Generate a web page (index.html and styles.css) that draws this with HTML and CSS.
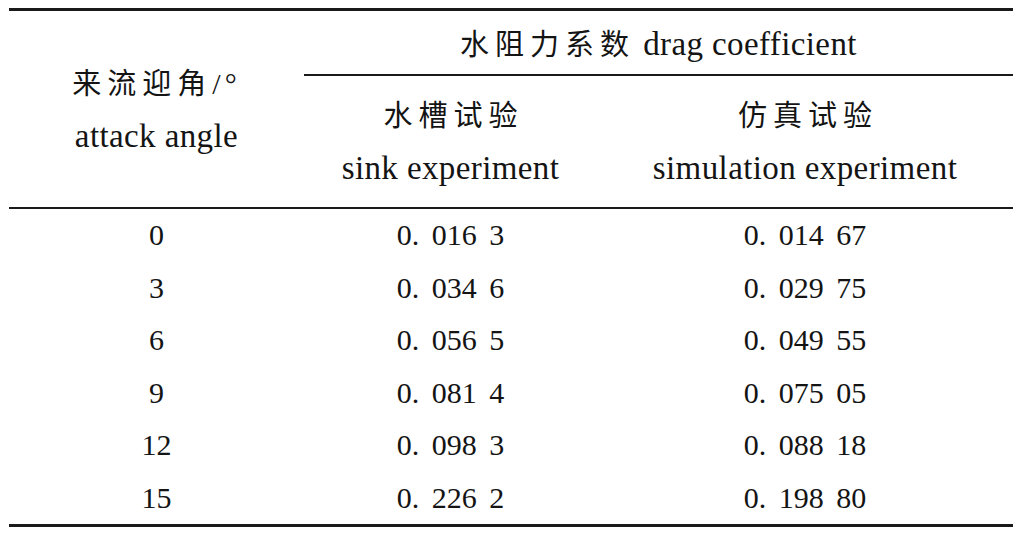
FILE: index.html
```html
<!DOCTYPE html>
<html lang="zh-CN">
<head>
<meta charset="utf-8">
<title>来流迎角与水阻力系数</title>
<link rel="stylesheet" href="styles.css">
</head>
<body>
<table class="data">
  <colgroup><col class="c1"><col class="c2"><col class="c3"></colgroup>
  <thead>
    <tr>
      <th rowspan="2" class="angle">
        <div class="line"><span class="zh">来流迎角</span><span class="sym">/°</span></div>
        <div class="line en">attack angle</div>
      </th>
      <th colspan="2" class="group">
        <div class="gline"><span class="zh">水阻力系数</span><span class="en gap">drag coefficient</span></div>
      </th>
    </tr>
    <tr>
      <th class="sub">
        <div class="line"><span class="zh">水槽试验</span></div>
        <div class="line en">sink experiment</div>
      </th>
      <th class="sub">
        <div class="line"><span class="zh">仿真试验</span></div>
        <div class="line en">simulation experiment</div>
      </th>
    </tr>
  </thead>
  <tbody>
    <tr><td>0</td><td>0. 016 3</td><td>0. 014 67</td></tr>
    <tr><td>3</td><td>0. 034 6</td><td>0. 029 75</td></tr>
    <tr><td>6</td><td>0. 056 5</td><td>0. 049 55</td></tr>
    <tr><td>9</td><td>0. 081 4</td><td>0. 075 05</td></tr>
    <tr><td>12</td><td>0. 098 3</td><td>0. 088 18</td></tr>
    <tr><td>15</td><td>0. 226 2</td><td>0. 198 80</td></tr>
  </tbody>
</table>
</body>
</html>
```

FILE: styles.css
```css
html, body {
  margin: 0;
  padding: 0;
  background: #ffffff;
}

body {
  color: #141414;
  font-family: "Liberation Serif", "Noto Sans CJK SC", serif;
}

.data {
  border-collapse: separate;
  border-spacing: 0;
  table-layout: fixed;
  width: 1004px;
  margin: 8px 0 0 9px;
}

col.c1 { width: 295px; }
col.c2 { width: 293px; }
col.c3 { width: 416px; }

.data th {
  font-weight: normal;
  padding: 0;
  text-align: center;
  vertical-align: middle;
  font-size: 30px;
}

.data thead tr:first-child th {
  border-top: 3px solid #1a1a1a;
}

.angle {
  border-bottom: 2px solid #1a1a1a;
}

.group {
  border-bottom: 2px solid #1a1a1a;
}

.sub {
  border-bottom: 2px solid #1a1a1a;
  padding: 10px 0 11px !important;
}

.gline {
  height: 63px;
  line-height: 63px;
  white-space: nowrap;
}

.line {
  height: 55px;
  line-height: 55px;
  white-space: nowrap;
}

.zh {
  font-family: "Noto Sans CJK SC", sans-serif;
  font-size: 29px;
  font-weight: 400;
  letter-spacing: 6px;
  margin-right: -6px;
}

.angle .zh {
  margin-right: 0;
}

.sym {
  font-family: "Liberation Serif", serif;
  font-size: 30px;
  letter-spacing: 4px;
}

.en {
  font-family: "Liberation Serif", serif;
  font-size: 33px;
  letter-spacing: 0.4px;
}

.gap {
  margin-left: 14px;
}

.data td {
  padding: 0;
  text-align: center;
  font-family: "Liberation Serif", serif;
  font-size: 30px;
  line-height: 52.5px;
  word-spacing: 5px;
  white-space: nowrap;
}

.data tbody tr:last-child td {
  border-bottom: 3px solid #1a1a1a;
}
```
